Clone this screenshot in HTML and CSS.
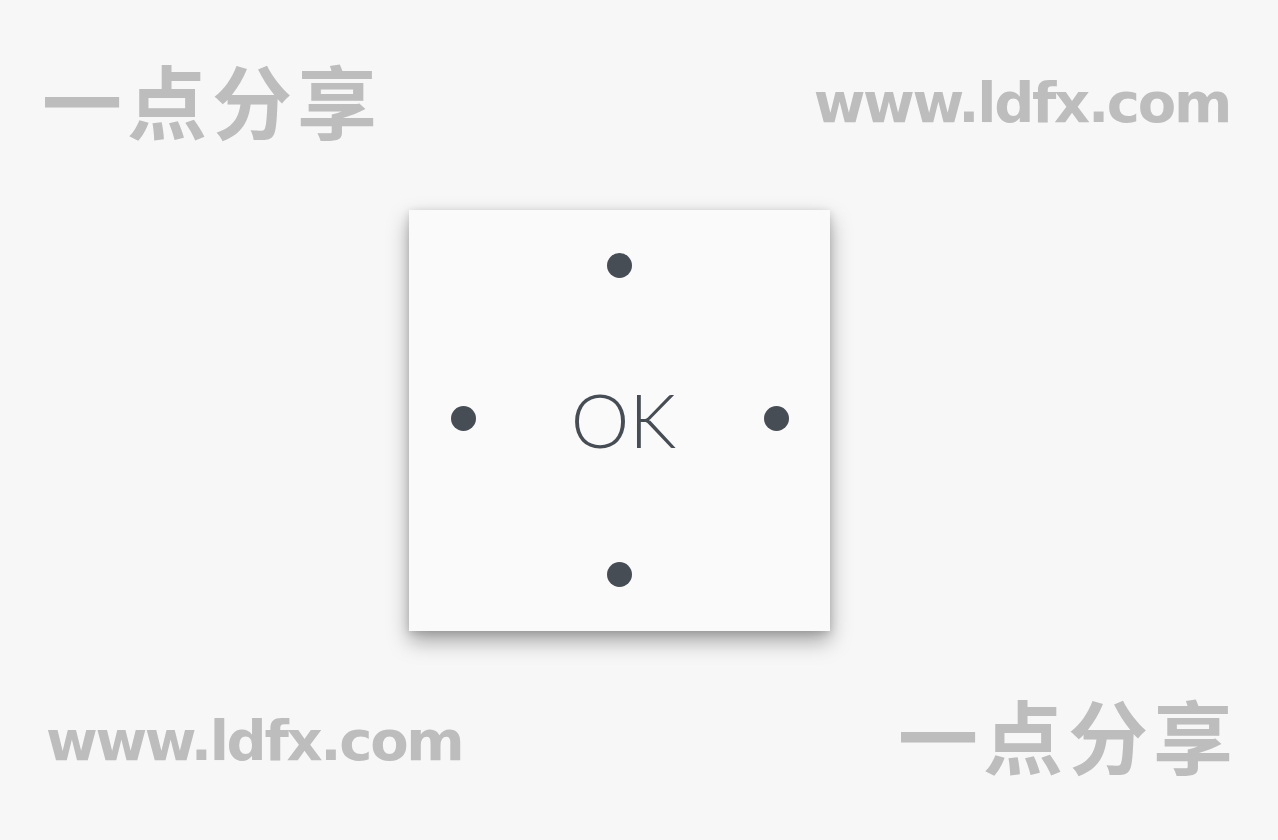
FILE: index.html
```html
<!DOCTYPE html>
<html lang="zh">
<head>
<meta charset="utf-8">
<title>OK</title>
<link rel="stylesheet" href="styles.css">
</head>
<body>
<div class="page">
  <div class="row top">
    <span class="wm-cn">一点分享</span>
    <span class="wm-url">www.ldfx.com</span>
  </div>
  <div class="stage">
    <div class="pad">
      <span></span><span class="dot"></span><span></span>
      <span class="dot"></span><span class="ok">OK</span><span class="dot"></span>
      <span></span><span class="dot"></span><span></span>
    </div>
  </div>
  <div class="row bottom">
    <span class="wm-url">www.ldfx.com</span>
    <span class="wm-cn">一点分享</span>
  </div>
</div>
</body>
</html>
```

FILE: styles.css
```css
html, body {
  margin: 0;
  padding: 0;
  background: #f7f7f7;
}
.page {
  width: 1278px;
  height: 840px;
  display: flex;
  flex-direction: column;
  overflow: hidden;
}
.row {
  display: flex;
  justify-content: space-between;
  align-items: flex-start;
}
.top {
  height: 210px;
  padding: 0 48px 0 42px;
  box-sizing: border-box;
}
.top .wm-cn { margin-top: 53px; }
.top .wm-url { margin-top: 71px; }
.bottom {
  flex: 1;
  padding: 0 40px 0 46px;
}
.bottom .wm-url { margin-top: 78px; }
.bottom .wm-cn { margin-top: 57px; }
.wm-cn {
  font-family: "Noto Sans CJK SC", sans-serif;
  font-weight: 700;
  font-size: 80px;
  line-height: 90px;
  letter-spacing: 5px;
  color: #bdbdbd;
}
.wm-url {
  font-family: "DejaVu Sans", sans-serif;
  font-weight: 700;
  font-size: 56px;
  line-height: 64px;
  letter-spacing: -2.3px;
  color: #bdbdbd;
}
.stage {
  display: flex;
  padding-left: 409px;
}
.pad {
  width: 421px;
  height: 421px;
  background: #fafafa;
  box-shadow: 0 10px 20px rgba(0,0,0,0.34), 0 2px 8px rgba(0,0,0,0.14);
  display: grid;
  grid-template-columns: 108px 1fr 108px;
  grid-template-rows: 110px 1fr 114px;
  place-items: center;
}
.dot {
  width: 25px;
  height: 25px;
  border-radius: 50%;
  background: #474d55;
}
.ok {
  font-family: "Lato", sans-serif;
  font-weight: 300;
  font-size: 74px;
  line-height: 1;
  color: #474d55;
  margin-left: 8px;
  margin-top: 2px;
}
```
